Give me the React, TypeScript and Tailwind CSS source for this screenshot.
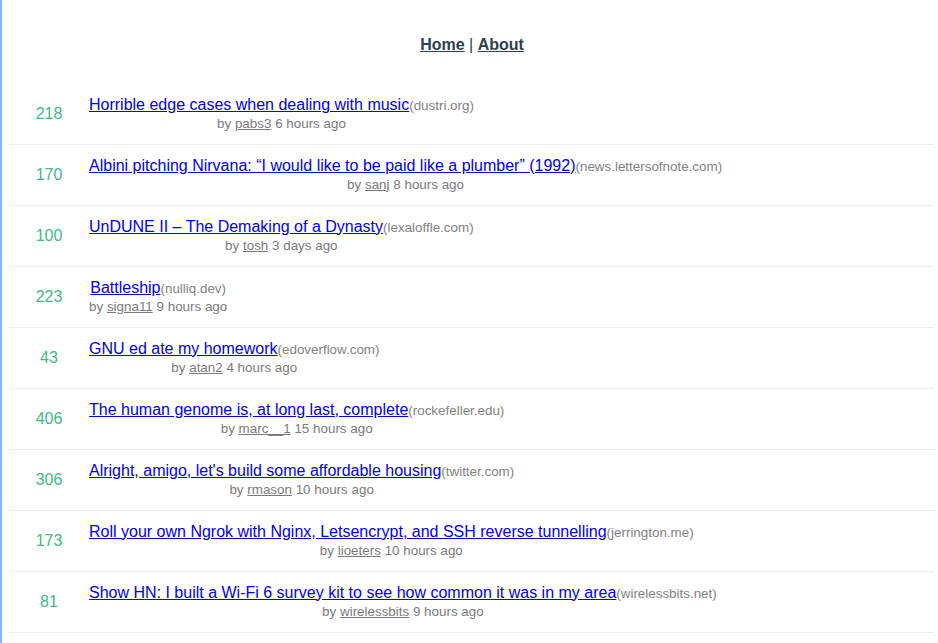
import React from 'react';

type Story = {
  score: number;
  title: string;
  domain: string;
  by: string;
  time: string;
};

const stories: Story[] = [
  { score: 218, title: 'Horrible edge cases when dealing with music', domain: 'dustri.org', by: 'pabs3', time: '6 hours ago' },
  { score: 170, title: 'Albini pitching Nirvana: “I would like to be paid like a plumber” (1992)', domain: 'news.lettersofnote.com', by: 'sanj', time: '8 hours ago' },
  { score: 100, title: 'UnDUNE II – The Demaking of a Dynasty', domain: 'lexaloffle.com', by: 'tosh', time: '3 days ago' },
  { score: 223, title: 'Battleship', domain: 'nulliq.dev', by: 'signa11', time: '9 hours ago' },
  { score: 43, title: 'GNU ed ate my homework', domain: 'edoverflow.com', by: 'atan2', time: '4 hours ago' },
  { score: 406, title: 'The human genome is, at long last, complete', domain: 'rockefeller.edu', by: 'marc__1', time: '15 hours ago' },
  { score: 306, title: "Alright, amigo, let's build some affordable housing", domain: 'twitter.com', by: 'rmason', time: '10 hours ago' },
  { score: 173, title: 'Roll your own Ngrok with Nginx, Letsencrypt, and SSH reverse tunnelling', domain: 'jerrington.me', by: 'lioeters', time: '10 hours ago' },
  { score: 81, title: 'Show HN: I built a Wi-Fi 6 survey kit to see how common it was in my area', domain: 'wirelessbits.net', by: 'wirelessbits', time: '9 hours ago' },
];

const StoryRow: React.FC<{ story: Story }> = ({ story }) => (
  <li className="flex items-center h-[61px] border-b border-[#eeeeee]">
    <span className="w-[80px] shrink-0 text-center text-[16px] text-[#42b983]">{story.score}</span>
    <div className="flex flex-col items-center text-center pb-[2px]">
      <div className="leading-[18px] whitespace-nowrap">
        <a href="#" className="text-[16px] text-[#0000ee] underline">{story.title}</a>
        <span className="text-[13.4px] text-[#828282]">({story.domain})</span>
      </div>
      <div className="mt-[1px] leading-[15px] text-[13.4px] text-[#7a7a7a] whitespace-nowrap">
        by <a href="#" className="underline">{story.by}</a> {story.time}
      </div>
    </div>
  </li>
);

export default function App() {
  return (
    <div
      className="min-h-[643px] border-l-2 border-[#7fbcf7] bg-white text-[#2c3e50]"
      style={{ fontFamily: '"Liberation Sans", Arial, sans-serif' }}
    >
      <nav className="pt-[36px] pb-[30px] pl-[4px] text-center text-[16px] font-bold leading-[18px]">
        <a href="#" className="underline text-[#2c3e50]">Home</a>
        <span className="font-normal"> | </span>
        <a href="#" className="underline text-[#2c3e50]">About</a>
      </nav>
      <ul className="ml-[7px] mr-[4px]">
        {stories.map((s) => (
          <StoryRow key={s.title} story={s} />
        ))}
      </ul>
    </div>
  );
}
